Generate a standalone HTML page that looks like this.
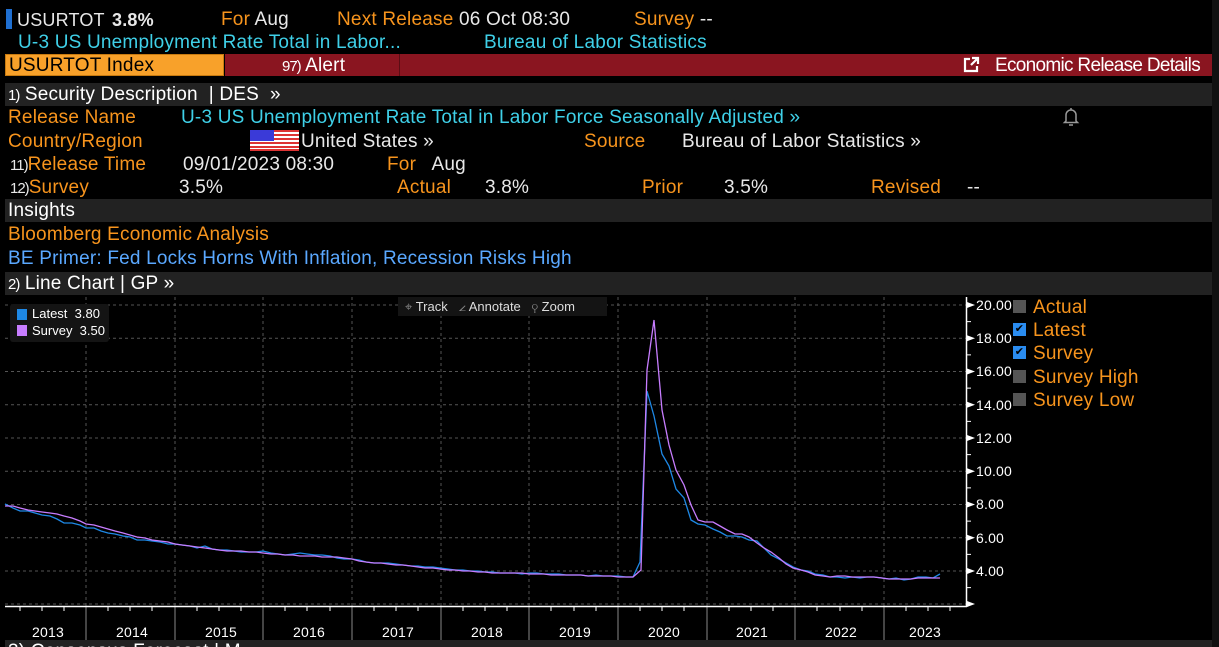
<!DOCTYPE html>
<html><head><meta charset="utf-8"><style>
*{margin:0;padding:0;box-sizing:border-box}
html,body{width:1219px;height:647px;overflow:hidden}
body{background:#000;position:relative;font-family:"Liberation Sans",sans-serif;font-size:19px;letter-spacing:0.2px;color:#fff}
.a{position:absolute;white-space:nowrap;line-height:22px;margin-top:1px}
.o{color:#f7941d}.c{color:#3fd0e8}.w{color:#e8e8e8}.b{color:#5aa8ff}
.bar{position:absolute;left:5px;width:1207px;height:23px;background:#222}
.n{font-size:15px;letter-spacing:-1px}
</style></head><body>
<div style="position:absolute;left:1212px;top:0;width:7px;height:647px;background:#111"></div>
<div style="position:absolute;left:6px;top:9px;width:6px;height:20px;background:#1f6fd1"></div>
<div class="a w" style="left:17px;top:8px;font-size:18px">USURTOT</div>
<div class="a w" style="left:112px;top:8px;font-weight:bold;font-size:18px">3.8%</div>
<div class="a" style="left:221px;top:8px"><span class="o">For</span> <span class="w">Aug</span></div>
<div class="a" style="left:337px;top:8px"><span class="o">Next Release</span> <span class="w">06 Oct 08:30</span></div>
<div class="a" style="left:634px;top:8px"><span class="o">Survey</span> <span class="w">--</span></div>
<div class="a c" style="left:18px;top:31px">U-3 US Unemployment Rate Total in Labor...</div>
<div class="a c" style="left:484px;top:31px">Bureau of Labor Statistics</div>
<div style="position:absolute;left:5px;top:54px;width:219px;height:22px;background:#f8a12a;border:1px solid #c77a10"></div>
<div style="position:absolute;left:225px;top:54px;width:987px;height:22px;background:#8a1520"></div>
<div style="position:absolute;left:399px;top:54px;width:1px;height:22px;background:#5a0d14"></div>
<div class="a" style="left:9px;top:54px;color:#000">USURTOT Index</div>
<div class="a" style="left:282px;top:54px"><span class="n">97)</span> Alert</div>
<svg style="position:absolute;left:962px;top:56px" width="18" height="18" viewBox="0 0 18 18"><path d="M8 3H3v12h12v-5" stroke="#fff" stroke-width="2.2" fill="none"/><path d="M9 9l6-6M10 2h6v6" stroke="#fff" stroke-width="2.2" fill="none"/></svg>
<div class="a" style="right:19px;top:54px;letter-spacing:-0.7px">Economic Release Details</div>
<div class="bar" style="top:83px"></div>
<div class="a" style="left:8px;top:83px"><span class="n">1)</span> Security Description &nbsp;| DES &nbsp;»</div>
<div class="a o" style="left:8px;top:106px">Release Name</div>
<div class="a c" style="left:181px;top:106px">U-3 US Unemployment Rate Total in Labor Force Seasonally Adjusted »</div>
<svg style="position:absolute;left:1062px;top:107px" width="18" height="20" viewBox="0 0 18 20"><path d="M4 14V8a5 5 0 0 1 10 0v6l1.5 1.5h-13zM7 18h4M9 1v2" stroke="#999" stroke-width="1.5" fill="none"/></svg>
<div class="a o" style="left:8px;top:130px">Country/Region</div>
<svg style="position:absolute;left:250px;top:130px" width="49" height="21"><rect width="49" height="21" fill="#fff"/><g fill="#d33"><rect y="0" width="49" height="2"/><rect y="4" width="49" height="2"/><rect y="8" width="49" height="2"/><rect y="12" width="49" height="2"/><rect y="16" width="49" height="2"/><rect y="19" width="49" height="2"/></g><rect width="24" height="11" fill="#3a3ad8"/></svg>
<div class="a w" style="left:301px;top:130px">United States »</div>
<div class="a o" style="left:584px;top:130px">Source</div>
<div class="a w" style="left:682px;top:130px">Bureau of Labor Statistics »</div>
<div class="a" style="left:10px;top:153px"><span class="n w">11)</span><span class="o">Release Time</span></div>
<div class="a w" style="left:183px;top:153px">09/01/2023 08:30</div>
<div class="a" style="left:387px;top:153px"><span class="o">For</span>&nbsp;&nbsp; <span class="w">Aug</span></div>
<div class="a" style="left:10px;top:176px"><span class="n w">12)</span><span class="o">Survey</span></div>
<div class="a w" style="left:179px;top:176px">3.5%</div>
<div class="a o" style="left:397px;top:176px">Actual</div>
<div class="a w" style="left:485px;top:176px">3.8%</div>
<div class="a o" style="left:642px;top:176px">Prior</div>
<div class="a w" style="left:724px;top:176px">3.5%</div>
<div class="a o" style="left:871px;top:176px">Revised</div>
<div class="a w" style="left:967px;top:176px">--</div>
<div class="bar" style="top:199px"></div>
<div class="a" style="left:8px;top:199px">Insights</div>
<div class="a o" style="left:8px;top:223px">Bloomberg Economic Analysis</div>
<div class="a b" style="left:8px;top:247px">BE Primer: Fed Locks Horns With Inflation, Recession Risks High</div>
<div class="bar" style="top:272px"></div>
<div class="a" style="left:8px;top:272px"><span class="n">2)</span> Line Chart | GP »</div>
<svg style="position:absolute;left:0;top:295px" width="1212" height="352" viewBox="0 295 1212 352">
<g stroke="#555" stroke-dasharray="3,3" stroke-width="1">
<line x1="5" x2="966" y1="305" y2="305"/><line x1="5" x2="966" y1="338.2" y2="338.2"/><line x1="5" x2="966" y1="371.5" y2="371.5"/><line x1="5" x2="966" y1="404.7" y2="404.7"/><line x1="5" x2="966" y1="438" y2="438"/><line x1="5" x2="966" y1="471.2" y2="471.2"/><line x1="5" x2="966" y1="504.5" y2="504.5"/><line x1="5" x2="966" y1="537.7" y2="537.7"/><line x1="5" x2="966" y1="571" y2="571"/><line x1="5" x2="966" y1="604" y2="604"/>
<line x1="86" x2="86" y1="297" y2="606"/><line x1="175" x2="175" y1="297" y2="606"/><line x1="263" x2="263" y1="297" y2="606"/><line x1="352" x2="352" y1="297" y2="606"/><line x1="441" x2="441" y1="297" y2="606"/><line x1="529" x2="529" y1="297" y2="606"/><line x1="618" x2="618" y1="297" y2="606"/><line x1="707" x2="707" y1="297" y2="606"/><line x1="795" x2="795" y1="297" y2="606"/><line x1="884" x2="884" y1="297" y2="606"/>
</g>
<g stroke="#888"><line x1="86" x2="86" y1="607" y2="640"/><line x1="175" x2="175" y1="607" y2="640"/><line x1="263" x2="263" y1="607" y2="640"/><line x1="352" x2="352" y1="607" y2="640"/><line x1="441" x2="441" y1="607" y2="640"/><line x1="529" x2="529" y1="607" y2="640"/><line x1="618" x2="618" y1="607" y2="640"/><line x1="707" x2="707" y1="607" y2="640"/><line x1="795" x2="795" y1="607" y2="640"/><line x1="884" x2="884" y1="607" y2="640"/></g>
<line x1="5" x2="967" y1="606.5" y2="606.5" stroke="#fff" stroke-width="1.5"/>
<line x1="966.5" x2="966.5" y1="297" y2="607" stroke="#fff" stroke-width="1.5"/>
<g stroke="#fff"><path d="M20 607v4M42 607v4M64 607v4M108 607v4M130 607v4M152 607v4M197 607v4M219 607v4M241 607v4M285 607v4M307 607v4M330 607v4M374 607v4M396 607v4M418 607v4M463 607v4M485 607v4M507 607v4M551 607v4M574 607v4M596 607v4M640 607v4M662 607v4M684 607v4M729 607v4M751 607v4M773 607v4M817 607v4M840 607v4M862 607v4M906 607v4M928 607v4M950 607v4"/>
<path d="M966 321.6h5M966 354.9h5M966 388.1h5M966 421.4h5M966 454.6h5M966 487.9h5M966 521.1h5M966 554.4h5M966 587.6h5"/></g>
<g fill="#fff"><path d="M967 302l8 3-8 3zM967 335.2l8 3-8 3zM967 368.5l8 3-8 3zM967 401.7l8 3-8 3zM967 435l8 3-8 3zM967 468.2l8 3-8 3zM967 501.5l8 3-8 3zM967 534.7l8 3-8 3zM967 568l8 3-8 3zM967 601l8 3-8 3z"/></g>
<g font-family="Liberation Sans,sans-serif" font-size="14" fill="#fff">
<text x="976" y="310">20.00</text><text x="976" y="343">18.00</text><text x="976" y="376">16.00</text><text x="976" y="410">14.00</text><text x="976" y="443">12.00</text><text x="976" y="476">10.00</text><text x="976" y="509">8.00</text><text x="976" y="543">6.00</text><text x="976" y="576">4.00</text>
<text x="32" y="637">2013</text><text x="116" y="637">2014</text><text x="205" y="637">2015</text><text x="293" y="637">2016</text><text x="382" y="637">2017</text><text x="471" y="637">2018</text><text x="559" y="637">2019</text><text x="648" y="637">2020</text><text x="736" y="637">2021</text><text x="825" y="637">2022</text><text x="909" y="637">2023</text>
</g>
<polyline fill="none" stroke="#1e88e5" stroke-width="1.3" points="5,504 13,508 20,511 28,511 35,513 42,515 50,516 57,519 64,523 72,523 80,525 86,528 94,528 101,531 108,533 115,534 123,536 130,537 137,540 145,540 152,541 160,542 168,544 175,544 182,545 190,546 197,548 205,546 212,549 219,550 227,550 234,551 241,552 249,552 256,552 263,551 271,553 278,554 285,555 293,554 300,553 307,554 315,555 322,555 330,556 337,558 344,559 352,559 359,560 366,562 374,563 381,563 388,563 396,564 403,565 411,566 418,566 425,567 433,567 440,568 448,569 455,570 463,570 470,571 478,571 485,572 492,572 500,573 507,573 515,573 522,574 529,573 537,573 544,574 551,574 559,574 566,575 574,575 581,575 588,576 596,575 603,576 611,576 618,576 626,577 633,577 640,562 647,391 654,416 662,454 669,466 676,489 684,498 691,520 698,524 705,525 713,529 720,532 727,536 735,536 742,537 749,540 757,541 764,548 771,555 779,559 786,563 793,567 801,570 808,571 815,574 823,575 830,577 837,577 845,578 852,577 860,578 867,577 874,577 882,578 889,579 896,578 904,580 911,579 918,577 926,577 933,578 940,574"/>
<polyline fill="none" stroke="#c77dff" stroke-width="1.3" points="5,506 13,506 20,508 28,510 35,511 42,512 50,513 57,514 64,516 72,518 80,521 86,524 94,525 101,527 108,529 115,531 123,533 130,535 137,537 145,538 152,540 160,541 168,542 175,544 182,545 190,546 197,547 205,548 212,549 219,550 227,551 234,551 241,551 249,552 256,552 263,553 271,554 278,554 285,555 293,555 300,556 307,556 315,556 322,557 330,557 337,557 344,558 352,559 359,561 366,562 374,563 381,563 388,564 396,565 403,565 411,566 418,567 425,568 433,568 440,569 448,570 455,570 463,571 470,571 478,572 485,572 492,573 500,573 507,573 515,573 522,573 529,574 537,574 544,574 551,575 559,575 566,575 574,575 581,575 588,576 596,576 603,576 611,576 618,577 626,577 633,577 641,570 647,370 654,320 662,410 669,445 676,470 684,485 691,505 698,520 705,522 713,522 720,526 727,530 735,534 742,534 749,537 757,543 764,548 771,552 779,558 786,564 793,568 801,570 808,572 815,575 823,576 830,577 837,576 845,576 852,577 860,577 867,577 874,577 882,578 889,579 896,579 904,579 911,579 918,578 926,578 933,578 940,578"/>
</svg>
<div style="position:absolute;left:10px;top:304px;width:99px;height:38px;background:#141414;border-radius:3px"></div>
<div style="position:absolute;left:17px;top:309px;width:10px;height:11px;background:#1e88e5"></div>
<div style="position:absolute;left:17px;top:325px;width:10px;height:11px;background:#c77dff"></div>
<div class="a" style="left:32px;top:304px;font-size:13px;line-height:17px;letter-spacing:0">Latest&nbsp; 3.80<br>Survey&nbsp; 3.50</div>
<div style="position:absolute;left:398px;top:297px;width:209px;height:19px;background:#141414"></div>
<div class="a" style="left:405px;top:296px;font-size:13px;line-height:19px;color:#ddd;letter-spacing:0"><span style="color:#888">⌖</span> Track &nbsp;&nbsp;<span style="color:#888">∠</span> Annotate &nbsp;&nbsp;<span style="color:#888">⚲</span> Zoom</div>
<div style="position:absolute;left:1013px;top:300px;width:13px;height:13px;background:#555"></div>
<div style="position:absolute;left:1013px;top:323px;width:13px;height:13px;background:#2a8cf0;color:#000;font-size:11px;line-height:13px;text-align:center">✔</div>
<div style="position:absolute;left:1013px;top:346px;width:13px;height:13px;background:#2a8cf0;color:#000;font-size:11px;line-height:13px;text-align:center">✔</div>
<div style="position:absolute;left:1013px;top:370px;width:13px;height:13px;background:#555"></div>
<div style="position:absolute;left:1013px;top:393px;width:13px;height:13px;background:#555"></div>
<div class="a o" style="left:1033px;top:295px;line-height:23.2px">Actual<br>Latest<br>Survey<br>Survey High<br>Survey Low</div>
<div style="position:absolute;left:5px;top:640px;width:1207px;height:7px;background:#222;overflow:hidden">
<div class="a" style="left:3px;top:0">3) Consensus Forecast | M</div></div>
</body></html>
